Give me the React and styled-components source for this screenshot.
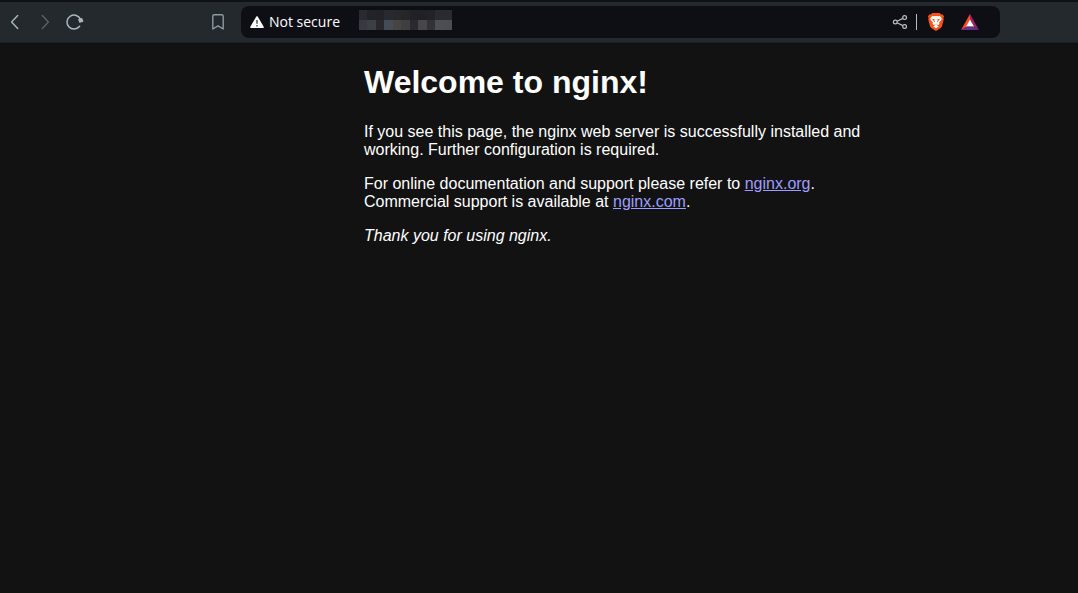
import React from "react";
import styled, { createGlobalStyle } from "styled-components";

const GlobalStyle = createGlobalStyle`
  body {
    margin: 0;
    background: #121212;
    color: #ffffff;
    font: 16px/18px "Liberation Sans", Arial, sans-serif;
  }
`;

const Toolbar = styled.header`
  display: flex;
  align-items: center;
  height: 40px;
  padding-right: 78px;
  border-top: 2px solid #101116;
  background: #23292d;
  border-bottom: 1px solid #1a1e20;
`;

const NavGroup = styled.nav`
  display: flex;
  flex: none;
  width: 203px;
`;

const ToolButton = styled.button`
  display: flex;
  flex: none;
  align-items: center;
  justify-content: center;
  width: ${(p) => p.$width || 30}px;
  height: 32px;
  padding: 0;
  border: 0;
  background: none;
  color: ${(p) => p.$color || "#a9b8c0"};

  svg {
    display: block;
  }
`;

const AddressBar = styled.div`
  display: flex;
  flex: 1;
  align-items: center;
  box-sizing: border-box;
  min-width: 0;
  height: 32px;
  margin-left: 8px;
  padding: 0 13px 0 9px;
  border-radius: 8px;
  background: #0e0f14;
`;

const Security = styled.button`
  display: flex;
  flex: none;
  align-items: center;
  gap: 5px;
  width: 109px;
  padding: 0;
  border: 0;
  background: none;
  color: #ffffff;
  font: 14px/20px "Open Sans", "Noto Sans", sans-serif;
  white-space: nowrap;
`;

const Mosaic = styled.div`
  display: grid;
  grid-template-columns: repeat(11, 1fr);
  grid-auto-rows: 10px;
  width: 93px;
  margin-bottom: 4px;
`;

const Tile = styled.span`
  background: ${(p) => p.$shade};
`;

const Actions = styled.div`
  display: flex;
  align-items: center;
  margin-left: auto;
`;

const Divider = styled.span`
  width: 1px;
  height: 16px;
  margin-right: 2px;
  background: #b9bdc2;
`;

const Page = styled.main`
  display: grid;
  grid-template-columns: minmax(16px, 364px) minmax(0, 560px) minmax(16px, 1fr);
`;

const Article = styled.article`
  grid-column: 2;
`;

const Title = styled.h1`
  margin: 21px 0 22px;
  font-size: 32px;
  line-height: 37px;
`;

const Paragraph = styled.p`
  margin: 0 0 16px;
`;

const Link = styled.a`
  color: #9e9eff;
`;

const tiles = [
  "#292b31", "#232428", "#222327", "#292a30", "#27282a", "#262628", "#222226", "#202125", "#222327", "#292b2f", "#292b2f",
  "#373943", "#3c3f43", "#29292b", "#434c57", "#484444", "#3f3f42", "#29292f", "#47474b", "#323238", "#4c4e54", "#4b4d52",
];

const Chevron = ({ d }) => (
  <svg width="16" height="16" viewBox="0 0 16 16" fill="none" stroke="currentColor" strokeWidth="1.4" strokeLinecap="round" strokeLinejoin="round">
    <path d={d} />
  </svg>
);

const ReloadIcon = () => (
  <svg width="18" height="18" viewBox="0 0 18 18">
    <path d="M13.6 13.3A7 7 0 1 1 14.6 6.6" fill="none" stroke="currentColor" strokeWidth="1.5" strokeLinecap="round" />
    <path d="M12.8 6.6L15.6 5.6L16.8 8.2L13.9 9.3Z" fill="currentColor" stroke="currentColor" strokeWidth="1.2" strokeLinejoin="round" />
  </svg>
);

const BookmarkIcon = () => (
  <svg width="14" height="18" viewBox="0 0 14 18" fill="none" stroke="currentColor" strokeWidth="1.4" strokeLinejoin="round">
    <path d="M3.2 1.8H10.8Q12.2 1.8 12.2 3.2V16L7 12.8L1.8 16V3.2Q1.8 1.8 3.2 1.8Z" />
  </svg>
);

const WarningIcon = () => (
  <svg width="14" height="14" viewBox="0 0 14 14">
    <path d="M7 2L13 12.2H1Z" fill="#fff" stroke="#fff" strokeWidth="1.6" strokeLinejoin="round" />
    <path d="M7 5V8.7M7 10V11.4" stroke="#34363b" strokeWidth="1.3" />
  </svg>
);

const ShareIcon = () => (
  <svg width="16" height="16" viewBox="0 0 16 16" fill="none" stroke="currentColor" strokeWidth="1.2">
    <circle cx="3.3" cy="8" r="1.9" />
    <circle cx="12.6" cy="3.6" r="1.9" />
    <circle cx="12.6" cy="12.5" r="1.9" />
    <path d="M5.1 7.2L10.8 4.4M5.1 8.8L10.8 11.6" />
  </svg>
);

const LionIcon = () => (
  <svg width="16" height="18" viewBox="0 0 16 18">
    <path d="M4.4 0H11.6L13.2 1.6L14.8 1.5L16 3.4L15.4 5L15.8 6.3L14.2 12.6Q13.8 14.2 12.4 15.2L8 18L3.6 15.2Q2.2 14.2 1.8 12.6L.2 6.3L.6 5L0 3.4L1.2 1.5L2.8 1.6Z" fill="#fb5117" />
    <path d="M4.2 2.9L6 3.3L8 3L10 3.3L11.8 2.9L13.7 5.2L13.2 7.3L11 9.8L11.5 11L10.2 12L9.5 11.8L8.9 12.1L10.7 13.4L8 15.2L5.3 13.4L7.1 12.1L6.5 11.8L5.8 12L4.5 11L5 9.8L2.8 7.3L2.3 5.2Z" fill="#fff" />
    <path d="M3.8 5.8L6.7 6.2L6.4 7.5L7 9.6L6 9L5.3 7.3ZM12.2 5.8L9.3 6.2L9.6 7.5L9 9.6L10 9L10.7 7.3ZM6.8 10.5L8 11L9.2 10.5L8 11.8Z" fill="#fb5117" />
  </svg>
);

const TriangleIcon = () => (
  <svg width="18" height="16" viewBox="0 0 18 16">
    <path d="M9 0L0 16L5.3 12.9L9 6.4Z" fill="#ff4724" />
    <path d="M9 0L18 16L12.7 12.9L9 6.4Z" fill="#9e1f63" />
    <path d="M0 16H18L12.7 12.9H5.3Z" fill="#662d91" />
    <path d="M9 5.4L13 12.6H5Z" fill="#fff" />
  </svg>
);

export default function App() {
  return (
    <>
      <GlobalStyle />
      <Toolbar>
        <NavGroup aria-label="Browser navigation">
          <ToolButton aria-label="Back"><Chevron d="M10.7 1.6L4.6 8L10.7 14.4" /></ToolButton>
          <ToolButton aria-label="Forward" $color="#59636a"><Chevron d="M5.3 1.6L11.4 8L5.3 14.4" /></ToolButton>
          <ToolButton aria-label="Reload"><ReloadIcon /></ToolButton>
        </NavGroup>
        <ToolButton aria-label="Bookmark this page" $color="#8b9aa3"><BookmarkIcon /></ToolButton>
        <AddressBar>
          <Security><WarningIcon />Not secure</Security>
          <Mosaic role="img" aria-label="Hidden address">
            {tiles.map((shade, i) => <Tile key={i} $shade={shade} />)}
          </Mosaic>
          <Actions>
            <ToolButton aria-label="Share" $width={32} $color="#b9bdc2"><ShareIcon /></ToolButton>
            <Divider />
            <ToolButton aria-label="Shields" $width={34}><LionIcon /></ToolButton>
            <ToolButton aria-label="Rewards" $width={34}><TriangleIcon /></ToolButton>
          </Actions>
        </AddressBar>
      </Toolbar>
      <Page>
        <Article>
          <Title>Welcome to nginx!</Title>
          <Paragraph>
            If you see this page, the nginx web server is successfully installed and working. Further configuration is required.
          </Paragraph>
          <Paragraph>
            For online documentation and support please refer to <Link href="http://nginx.org/">nginx.org</Link>.<br />
            Commercial support is available at <Link href="http://nginx.com/">nginx.com</Link>.
          </Paragraph>
          <Paragraph><em>Thank you for using nginx.</em></Paragraph>
        </Article>
      </Page>
    </>
  );
}
